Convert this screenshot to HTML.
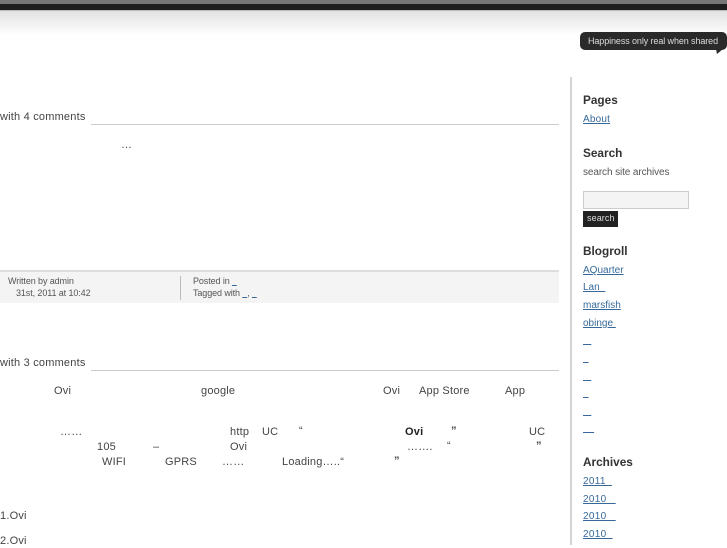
<!DOCTYPE html>
<html>
<head>
<meta charset="utf-8">
<style>
html,body{margin:0;padding:0;background:#fff;}
body{position:relative;width:727px;height:545px;overflow:hidden;font-family:"Liberation Sans",sans-serif;color:#444;filter:blur(.3px);}
.t{position:absolute;white-space:pre;line-height:14px;}
.b{font-size:11px;letter-spacing:.2px;color:#444;}
.h{font-size:11.8px;font-weight:bold;color:#333;letter-spacing:0;left:583px;}
.l{font-size:10px;letter-spacing:0;left:583px;color:#36699a;text-decoration:underline;}
.d{letter-spacing:.3px;}
.f{font-size:9px;letter-spacing:-.1px;color:#555;}
.m{font-size:9px;color:#36699a;text-decoration:underline;}
.r{position:absolute;}
</style>
</head>
<body>
<div class="r" style="left:0;top:0;width:727px;height:4px;background:#777;"></div>
<div class="r" style="left:0;top:4px;width:727px;height:6px;background:#1e1e1e;"></div>
<div class="r" style="left:0;top:10px;width:727px;height:1px;background:#bbb;"></div>
<div class="r" style="left:0;top:11px;width:727px;height:24px;background:linear-gradient(#e2e2e2,#fff);"></div>

<div class="r" style="left:580px;top:32px;width:147px;height:18px;background:#2a2a2a;border-radius:5px;"></div>
<svg class="r" style="left:712px;top:48px;" width="12" height="7"><path d="M4 1 L11 1 L5 6 Z" fill="#2a2a2a"/></svg>
<div class="t" style="left:588px;top:34px;font-size:9px;letter-spacing:-.1px;color:#ddd;">Happiness only real when shared</div>

<div class="t b" style="left:0;top:110px;">with 4 comments</div>
<div class="r" style="left:91px;top:124px;width:468px;height:1px;background:#ccc;"></div>
<div class="t b" style="left:121px;top:138px;">…</div>

<div class="r" style="left:0;top:270px;width:559px;height:33px;background:#f4f4f4;border-top:2px solid #ddd;box-sizing:border-box;"></div>
<div class="r" style="left:180px;top:276px;width:1px;height:24px;background:#bbb;"></div>
<div class="t f" style="left:8px;top:274px;">Written by admin</div>
<div class="t f" style="left:16px;top:286px;">31st, 2011 at 10:42</div>
<div class="t f" style="left:193px;top:274px;">Posted in <span class="m">&nbsp;&nbsp;</span></div>
<div class="t f" style="left:193px;top:286px;">Tagged with <span class="m">&nbsp;&nbsp;</span>, <span class="m">&nbsp;&nbsp;</span></div>

<div class="t b" style="left:0;top:356px;">with 3 comments</div>
<div class="r" style="left:91px;top:370px;width:468px;height:1px;background:#ccc;"></div>

<div class="t b" style="left:54px;top:384px;">Ovi</div>
<div class="t b" style="left:201px;top:384px;">google</div>
<div class="t b" style="left:383px;top:384px;">Ovi</div>
<div class="t b" style="left:419px;top:384px;">App Store</div>
<div class="t b" style="left:505px;top:384px;">App</div>

<div class="t b" style="left:60px;top:425px;">……</div>
<div class="t b" style="left:230px;top:425px;">http</div>
<div class="t b" style="left:262px;top:425px;">UC</div>
<div class="t b" style="left:299px;top:424px;">“</div>
<div class="t b" style="left:405px;top:425px;font-weight:bold;color:#222;">Ovi</div>
<div class="t b" style="left:451px;top:424px;font-weight:bold;">”</div>
<div class="t b" style="left:529px;top:425px;">UC</div>

<div class="t b" style="left:97px;top:440px;">105</div>
<div class="t b" style="left:153px;top:440px;">–</div>
<div class="t b" style="left:230px;top:440px;">Ovi</div>
<div class="t b" style="left:407px;top:440px;">…….</div>
<div class="t b" style="left:447px;top:439px;">“</div>
<div class="t b" style="left:536px;top:439px;font-weight:bold;">”</div>

<div class="t b" style="left:102px;top:455px;">WIFI</div>
<div class="t b" style="left:165px;top:455px;">GPRS</div>
<div class="t b" style="left:222px;top:455px;">……</div>
<div class="t b" style="left:282px;top:455px;">Loading…..“</div>
<div class="t b" style="left:394px;top:454px;font-weight:bold;">”</div>

<div class="t b" style="left:0;top:509px;">1.Ovi</div>
<div class="t b" style="left:0;top:534px;">2.Ovi</div>

<div class="r" style="left:570px;top:77px;width:2px;height:468px;background:#d4d4d4;"></div>

<div class="t h" style="top:93px;">Pages</div>
<div class="t l" style="top:113px;letter-spacing:.2px;">About</div>
<div class="t h" style="top:146px;">Search</div>
<div class="t" style="left:583px;top:166px;font-size:10px;letter-spacing:-.1px;color:#555;">search site archives</div>
<div class="r" style="left:583px;top:191px;width:106px;height:18px;background:#f4f4f4;border:1px solid #ccc;box-sizing:border-box;"></div>
<div class="r" style="left:583px;top:211px;width:35px;height:16px;background:#222;"></div>
<div class="t" style="left:587px;top:211px;font-size:9px;letter-spacing:.1px;color:#ddd;">search</div>

<div class="t h" style="top:244px;">Blogroll</div>
<div class="t l" style="top:264px;">AQuarter</div>
<div class="t l" style="top:281px;">Lan&nbsp;&nbsp;</div>
<div class="t l" style="top:299px;">marsfish</div>
<div class="t l" style="top:317px;">obinge&nbsp;</div>
<div class="t l" style="top:334px;">&nbsp;&nbsp;&nbsp;</div>
<div class="t l" style="top:352px;">&nbsp;&nbsp;</div>
<div class="t l" style="top:370px;">&nbsp;&nbsp;&nbsp;</div>
<div class="t l" style="top:387px;">&nbsp;&nbsp;</div>
<div class="t l" style="top:405px;">&nbsp;&nbsp;&nbsp;</div>
<div class="t l" style="top:422px;">&nbsp;&nbsp;&nbsp;&nbsp;</div>

<div class="t h" style="top:455px;">Archives</div>
<div class="t l d" style="top:475px;">2011&nbsp;&nbsp;</div>
<div class="t l d" style="top:493px;">2010&nbsp;&nbsp;&nbsp;</div>
<div class="t l d" style="top:510px;">2010&nbsp;&nbsp;&nbsp;</div>
<div class="t l d" style="top:528px;">2010&nbsp;&nbsp;</div>
</body>
</html>
